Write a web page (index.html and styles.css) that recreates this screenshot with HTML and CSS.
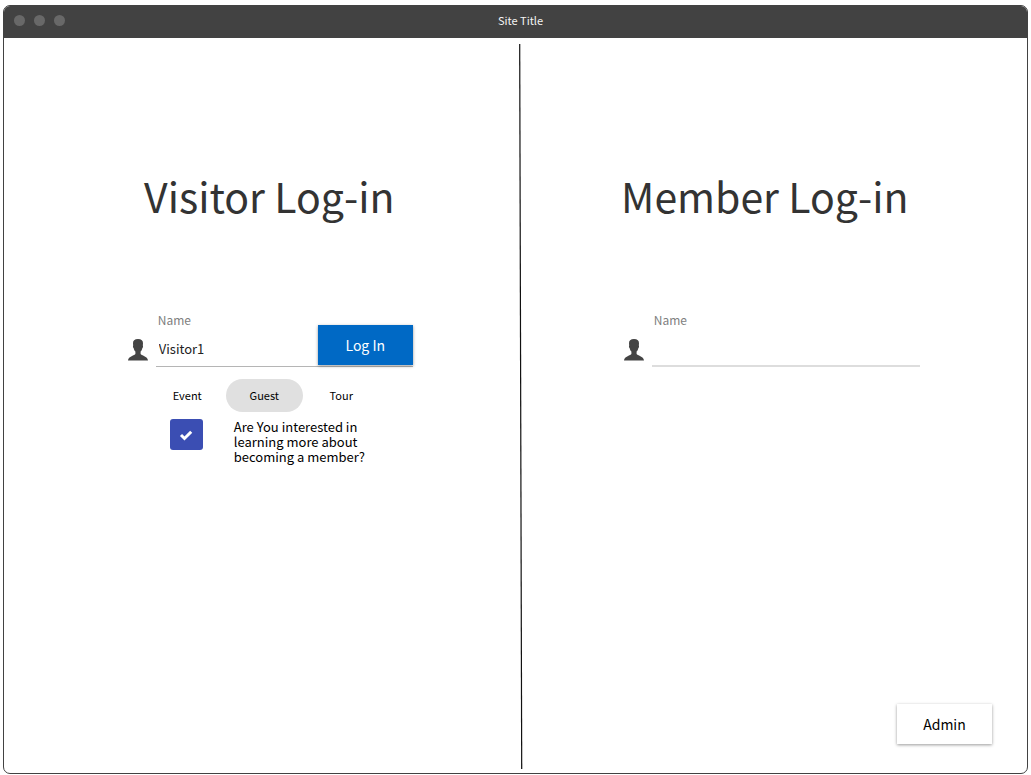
FILE: index.html
```html
<!DOCTYPE html>
<html lang="en">
<head>
<meta charset="utf-8">
<meta name="viewport" content="width=device-width, initial-scale=1">
<title>Site Title</title>
<link rel="stylesheet" href="styles.css">
</head>
<body>
<div class="window">
  <header class="titlebar">
    <div class="dots"><span class="dot"></span><span class="dot"></span><span class="dot"></span></div>
    <div class="site-title">Site Title</div>
  </header>
  <main class="panels">
    <section class="panel visitor">
      <h1 class="heading">Visitor Log-in</h1>
      <form class="form visitor-form">
        <div class="field">
          <svg class="person" viewBox="0 0 20 22" aria-hidden="true"><path d="M10 0C6.600 0 4.800 1.600 5 4.600L5.200 6.500C4.700 6.800 5 8.800 5.700 9.300C6 10.800 6.600 11.800 7.400 12.600V15C6.800 16.600 0.400 17 0 21.500H20C19.600 17 13.200 16.600 12.600 15V12.600C13.400 11.800 14 10.800 14.300 9.300C15 8.800 15.300 6.800 14.800 6.500L15 4.600C15.200 1.600 13.400 0 10 0Z"/></svg>
          <div class="entry">
            <label class="label" for="visitor-name">Name</label>
            <div class="entry-row">
              <input class="input" id="visitor-name" type="text" value="Visitor1">
              <button class="button login" type="button">Log In</button>
            </div>
          </div>
        </div>
        <div class="tabs">
          <button class="tab" type="button">Event</button>
          <button class="tab selected" type="button" aria-pressed="true">Guest</button>
          <button class="tab" type="button">Tour</button>
        </div>
        <div class="interest">
          <span class="check">
            <input class="checkbox" id="interest" type="checkbox" checked>
            <svg class="tick" viewBox="0 0 14 12" aria-hidden="true"><path d="M2 6L5.500 9.500L12.200 2.800"/></svg>
          </span>
          <label class="question" for="interest">Are You interested in learning more about becoming a member?</label>
        </div>
      </form>
    </section>
    <svg class="divider" viewBox="0 0 4 724" preserveAspectRatio="none" aria-hidden="true"><path d="M0.700 0L2.700 724"/></svg>
    <section class="panel member">
      <h1 class="heading">Member Log-in</h1>
      <form class="form member-form">
        <div class="field">
          <svg class="person" viewBox="0 0 20 22" aria-hidden="true"><path d="M10 0C6.600 0 4.800 1.600 5 4.600L5.200 6.500C4.700 6.800 5 8.800 5.700 9.300C6 10.800 6.600 11.800 7.400 12.600V15C6.800 16.600 0.400 17 0 21.500H20C19.600 17 13.200 16.600 12.600 15V12.600C13.400 11.800 14 10.800 14.300 9.300C15 8.800 15.300 6.800 14.800 6.500L15 4.600C15.200 1.600 13.400 0 10 0Z"/></svg>
          <div class="entry">
            <label class="label" for="member-name">Name</label>
            <div class="entry-row">
              <input class="input" id="member-name" type="text">
            </div>
          </div>
        </div>
      </form>
      <button class="button admin" type="button">Admin</button>
    </section>
  </main>
</div>
</body>
</html>
```
FILE: styles.css
```css
* { box-sizing: border-box; }
body {
  margin: 0;
  min-height: 100vh;
  padding: 5px 3px 1px;
  display: flex;
  background: #fff;
  color: #000;
  font-family: "Noto Sans CJK SC", "Noto Sans", sans-serif;
}
button, input { font: inherit; color: inherit; }
.window {
  flex: 1;
  display: flex;
  flex-direction: column;
  border: 1px solid #424242;
  border-radius: 7px;
  overflow: hidden;
}
.titlebar {
  display: grid;
  grid-template-columns: 1fr auto 1fr;
  align-items: center;
  height: 32px;
  padding: 0 10px 4px;
  background: #424242;
  color: #f4f4f4;
  font-size: 11px;
  line-height: 16px;
}
.site-title { margin-left: 10px; }
.dots { display: flex; gap: 9px; }
.dot { width: 11px; height: 11px; border-radius: 50%; background: #686868; }
.panels {
  flex: 1;
  display: grid;
  grid-template-columns: 51fr 4px 50fr;
}
.panel {
  display: flex;
  flex-direction: column;
  align-items: center;
  padding-top: 126px;
}
.visitor { padding-left: 16px; }
.member { padding-right: 20px; }
.divider { width: 4px; height: calc(100% - 10px); margin-top: 6px; }
.divider path { fill: none; stroke: #111; stroke-width: 1.2; }
.heading {
  margin: 0;
  color: #333;
  font-size: 41px;
  font-weight: 400;
  line-height: 62px;
}
.form { margin-top: 86px; }
.visitor-form { width: 285px; margin-left: 2px; }
.member-form { width: 296px; margin-left: 14px; }
.field { display: flex; align-items: flex-end; gap: 8px; }
.person { flex: none; width: 20px; height: 22px; margin-bottom: 6px; fill: #444; }
.entry { flex: 1; min-width: 0; }
.label {
  display: block;
  padding-left: 2px;
  color: #808080;
  font-size: 12px;
  line-height: 16px;
}
.entry-row { display: flex; height: 39px; border-bottom: 1px solid #b5b5b5; }
.member-form .entry-row { border-bottom: 2px solid #ddd; }
.input {
  flex: 1;
  min-width: 0;
  padding: 3px 3px 0;
  border: 0;
  outline: 0;
  background: transparent;
  color: #222;
  font-size: 13px;
}
.button {
  width: 95px;
  height: 40px;
  border: 0;
  padding: 0;
  font-size: 14px;
  box-shadow: 0 1px 3px rgba(0, 0, 0, .4);
}
.login { margin-top: -3px; background: #0069c5; color: #fff; }
.admin { align-self: flex-end; margin: auto 15px 29px 0; background: #fff; }
.tabs { display: flex; margin: 12px 0 0 21px; }
.tab {
  width: 77px;
  height: 33px;
  padding: 0 0 2px;
  border: 0;
  border-radius: 17px;
  background: transparent;
  font-size: 11px;
}
.selected { background: #e0e0e0; }
.interest { display: flex; gap: 31px; margin: 7px 0 0 42px; }
.check { display: grid; align-self: flex-start; place-items: center; }
.check > * { grid-area: 1 / 1; }
.checkbox {
  appearance: none;
  width: 33px;
  height: 31px;
  margin: 0;
  border-radius: 3px;
  background: #3b4eb3;
}
.tick {
  width: 14px;
  height: 12px;
  fill: none;
  stroke: #fff;
  stroke-width: 3;
  pointer-events: none;
}
.question { width: 144px; font-size: 13px; line-height: 15px; }
```
